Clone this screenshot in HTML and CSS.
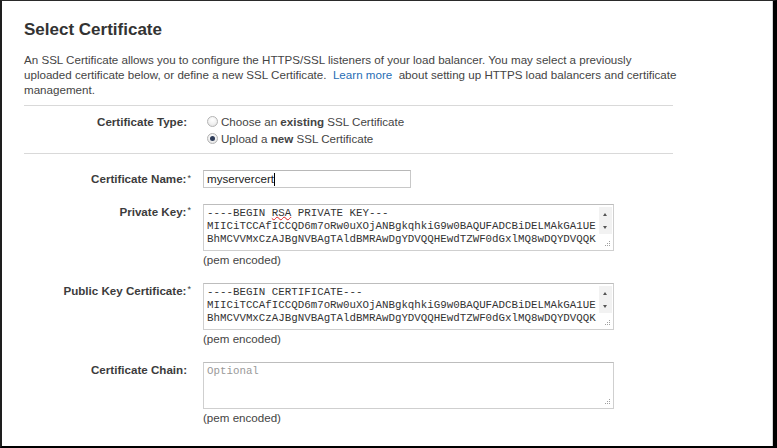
FILE: index.html
```html
<!DOCTYPE html>
<html>
<head>
<meta charset="utf-8">
<link rel="stylesheet" href="styles.css">
</head>
<body>
<div class="frame">
  <div class="content">
    <h1 class="title">Select Certificate</h1>
    <p class="intro">An SSL Certificate allows you to configure the HTTPS/SSL listeners of your load balancer. You may select a previously<br>uploaded certificate below, or define a new SSL Certificate.&nbsp; <a class="link">Learn more</a>&nbsp; about setting up HTTPS load balancers and certificate<br>management.</p>
    <div class="sep"></div>
    <div class="row type-row">
      <div class="label">Certificate Type:</div>
      <div class="radios">
        <div class="radio"><span class="dot"></span><span>Choose an <b>existing</b> SSL Certificate</span></div>
        <div class="radio"><span class="dot checked"></span><span>Upload a <b>new</b> SSL Certificate</span></div>
      </div>
    </div>
    <div class="sep"></div>
    <div class="fields">
      <div class="row name-row">
        <div class="label">Certificate Name:<span class="req">*</span></div>
        <div class="input"><span>myservercert</span><span class="caret"></span></div>
      </div>
      <div class="row area-row">
        <div class="label">Private Key:<span class="req">*</span></div>
        <div class="field">
          <div class="area">
            <div class="text">
              <div class="ln">----BEGIN <span class="spell">RSA</span> PRIVATE KEY---</div>
              <div class="ln">MIICiTCCAfICCQD6m7oRw0uXOjANBgkqhkiG9w0BAQUFADCBiDELMAkGA1UE</div>
              <div class="ln">BhMCVVMxCzAJBgNVBAgTAldBMRAwDgYDVQQHEwdTZWF0dGxlMQ8wDQYDVQQK</div>
            </div>
            <div class="sb"><span class="up"></span><span class="down"></span></div>
            <svg class="grip" width="6" height="6" viewBox="0 0 6 6"><rect x="5" y="0" width="1" height="1"/><rect x="3" y="2" width="1" height="1"/><rect x="5" y="2" width="1" height="1"/><rect x="1" y="4" width="1" height="1"/><rect x="3" y="4" width="1" height="1"/><rect x="5" y="4" width="1" height="1"/></svg>
          </div>
          <div class="hint">(pem encoded)</div>
        </div>
      </div>
      <div class="row area-row">
        <div class="label">Public Key Certificate:<span class="req">*</span></div>
        <div class="field">
          <div class="area">
            <div class="text">
              <div class="ln">----BEGIN CERTIFICATE---</div>
              <div class="ln">MIICiTCCAfICCQD6m7oRw0uXOjANBgkqhkiG9w0BAQUFADCBiDELMAkGA1UE</div>
              <div class="ln">BhMCVVMxCzAJBgNVBAgTAldBMRAwDgYDVQQHEwdTZWF0dGxlMQ8wDQYDVQQK</div>
            </div>
            <div class="sb"><span class="up"></span><span class="down"></span></div>
            <svg class="grip" width="6" height="6" viewBox="0 0 6 6"><rect x="5" y="0" width="1" height="1"/><rect x="3" y="2" width="1" height="1"/><rect x="5" y="2" width="1" height="1"/><rect x="1" y="4" width="1" height="1"/><rect x="3" y="4" width="1" height="1"/><rect x="5" y="4" width="1" height="1"/></svg>
          </div>
          <div class="hint">(pem encoded)</div>
        </div>
      </div>
      <div class="row area-row">
        <div class="label">Certificate Chain:</div>
        <div class="field">
          <div class="area">
            <div class="text placeholder"><div class="ln">Optional</div></div>
            <svg class="grip" width="6" height="6" viewBox="0 0 6 6"><rect x="5" y="0" width="1" height="1"/><rect x="3" y="2" width="1" height="1"/><rect x="5" y="2" width="1" height="1"/><rect x="1" y="4" width="1" height="1"/><rect x="3" y="4" width="1" height="1"/><rect x="5" y="4" width="1" height="1"/></svg>
          </div>
          <div class="hint">(pem encoded)</div>
        </div>
      </div>
    </div>
  </div>
</div>
</body>
</html>
```

FILE: styles.css
```css
html, body {
  margin: 0;
  padding: 0;
  background: #000;
}
body {
  font-family: "Liberation Sans", Arial, sans-serif;
  color: #444;
  font-size: 11.6px;
}
.frame {
  width: 777px;
  height: 448px;
  box-sizing: border-box;
  background: #fff;
  border-top: 1px solid #2a2a2a;
  border-left: 2px solid #1e1e1e;
  border-right: 4px solid #000;
  border-bottom: 2px solid #000;
  box-shadow: inset -1px 0 0 #d4d4d4;
  padding: 19px 0 0 22px;
  overflow: hidden;
}
.content {
  width: 649px;
}
.title {
  margin: 0;
  font-size: 17px;
  line-height: 20px;
  font-weight: bold;
  color: #333;
}
.intro {
  margin: 12px 0 0 0;
  line-height: 15px;
  color: #444;
  white-space: nowrap;
}
.link {
  color: #1f6db5;
}
.sep {
  height: 1px;
  background: #d9d9d9;
  margin-top: 8px;
}
.row {
  display: grid;
  grid-template-columns: 163px 1fr;
  column-gap: 16px;
}
.label {
  text-align: right;
  font-weight: bold;
  color: #3c3c3c;
}
.req {
  font-size: 9px;
  vertical-align: top;
  position: relative;
  top: -1px;
  margin-left: 1px;
  margin-right: -4px;
  font-weight: normal;
}
.type-row {
  padding: 7px 0 6px 0;
  line-height: 17px;
}
.type-row + .sep {
  margin-top: 0;
}
.radios {
  display: flex;
  flex-direction: column;
}
.radio {
  display: flex;
  align-items: center;
  height: 17px;
}
.dot {
  width: 9px;
  height: 9px;
  border-radius: 50%;
  border: 1px solid #b4b4b4;
  background: radial-gradient(circle at 50% 35%, #ffffff 0%, #f2f2f2 50%, #dcdcdc 100%);
  margin: 0 3px 0 4px;
  display: flex;
  align-items: center;
  justify-content: center;
  flex: none;
}
.dot.checked::after {
  content: "";
  width: 5px;
  height: 5px;
  border-radius: 50%;
  background: #2f3d5a;
}
.fields {
  display: flex;
  flex-direction: column;
  gap: 16px;
  margin-top: 16px;
}
.name-row .label {
  line-height: 18px;
}
.input {
  width: 208px;
  height: 18px;
  box-sizing: border-box;
  border: 1px solid #c8c8c8;
  border-top-color: #b8b8b8;
  padding: 0 3px;
  line-height: 16px;
  color: #222;
  display: flex;
  align-items: center;
}
.caret {
  width: 1px;
  height: 13px;
  background: #000;
}
.area-row .label {
  line-height: 15px;
}
.field {
  display: flex;
  flex-direction: column;
}
.area {
  position: relative;
  width: 411px;
  height: 47px;
  box-sizing: border-box;
  border: 1px solid #cfcfcf;
  border-top-color: #bdbdbd;
  padding: 2px 3px;
  overflow: hidden;
}
.text {
  font-family: "Liberation Mono", "Courier New", monospace;
  font-size: 10.8px;
  line-height: 13px;
  color: #333;
}
.ln {
  height: 13px;
  white-space: pre;
}
.placeholder {
  color: #999;
}
.spell {
  text-decoration: underline wavy #e02020;
  text-decoration-thickness: 1px;
  text-underline-offset: 0px;
  text-decoration-skip-ink: none;
}
.sb {
  position: absolute;
  top: 2px;
  right: 1px;
  width: 13px;
  height: 27px;
  background: #f2f2f2;
}
.up, .down {
  position: absolute;
  left: 4px;
  width: 0;
  height: 0;
  border-left: 2.5px solid transparent;
  border-right: 2.5px solid transparent;
}
.up {
  top: 6px;
  border-bottom: 3px solid #555;
}
.down {
  top: 19px;
  border-top: 3px solid #555;
}
.grip {
  position: absolute;
  right: 3px;
  bottom: 3px;
  fill: #a0a0a0;
}
.hint {
  margin-top: 1px;
  line-height: 15px;
  color: #444;
}
```
